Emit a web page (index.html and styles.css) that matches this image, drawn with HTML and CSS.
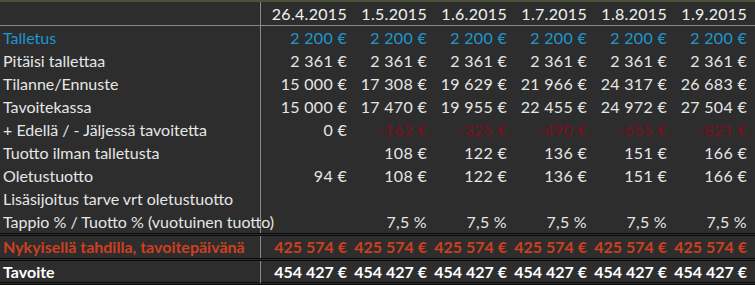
FILE: index.html
```html
<!DOCTYPE html>
<html lang="fi">
<head>
<meta charset="utf-8">
<title>Tavoite</title>
<link rel="stylesheet" href="styles.css">
</head>
<body>
<div class="sheet">
  <div class="row head">
    <div class="lbl"></div>
    <div class="v">26.4.2015</div><div class="v">1.5.2015</div><div class="v">1.6.2015</div><div class="v">1.7.2015</div><div class="v">1.8.2015</div><div class="v">1.9.2015</div>
  </div>
  <div class="row blue">
    <div class="lbl">Talletus</div>
    <div class="v">2 200 €</div><div class="v">2 200 €</div><div class="v">2 200 €</div><div class="v">2 200 €</div><div class="v">2 200 €</div><div class="v">2 200 €</div>
  </div>
  <div class="row">
    <div class="lbl">Pitäisi tallettaa</div>
    <div class="v">2 361 €</div><div class="v">2 361 €</div><div class="v">2 361 €</div><div class="v">2 361 €</div><div class="v">2 361 €</div><div class="v">2 361 €</div>
  </div>
  <div class="row">
    <div class="lbl">Tilanne/Ennuste</div>
    <div class="v">15 000 €</div><div class="v">17 308 €</div><div class="v">19 629 €</div><div class="v">21 966 €</div><div class="v">24 317 €</div><div class="v">26 683 €</div>
  </div>
  <div class="row">
    <div class="lbl">Tavoitekassa</div>
    <div class="v">15 000 €</div><div class="v">17 470 €</div><div class="v">19 955 €</div><div class="v">22 455 €</div><div class="v">24 972 €</div><div class="v">27 504 €</div>
  </div>
  <div class="row">
    <div class="lbl">+ Edellä / - Jäljessä tavoitetta</div>
    <div class="v">0 €</div><div class="v neg">-162 €</div><div class="v neg">-325 €</div><div class="v neg">-490 €</div><div class="v neg">-655 €</div><div class="v neg">-821 €</div>
  </div>
  <div class="row">
    <div class="lbl">Tuotto ilman talletusta</div>
    <div class="v"></div><div class="v">108 €</div><div class="v">122 €</div><div class="v">136 €</div><div class="v">151 €</div><div class="v">166 €</div>
  </div>
  <div class="row">
    <div class="lbl">Oletustuotto</div>
    <div class="v">94 €</div><div class="v">108 €</div><div class="v">122 €</div><div class="v">136 €</div><div class="v">151 €</div><div class="v">166 €</div>
  </div>
  <div class="row">
    <div class="lbl">Lisäsijoitus tarve vrt oletustuotto</div>
    <div class="v"></div><div class="v"></div><div class="v"></div><div class="v"></div><div class="v"></div><div class="v"></div>
  </div>
  <div class="row">
    <div class="lbl">Tappio % / Tuotto % (vuotuinen tuotto)</div>
    <div class="v"></div><div class="v">7,5 %</div><div class="v">7,5 %</div><div class="v">7,5 %</div><div class="v">7,5 %</div><div class="v">7,5 %</div>
  </div>
  <div class="row total orange">
    <div class="lbl">Nykyisellä tahdilla, tavoitepäivänä</div>
    <div class="v">425 574 €</div><div class="v">425 574 €</div><div class="v">425 574 €</div><div class="v">425 574 €</div><div class="v">425 574 €</div><div class="v">425 574 €</div>
  </div>
  <div class="row total last">
    <div class="lbl">Tavoite</div>
    <div class="v">454 427 €</div><div class="v">454 427 €</div><div class="v">454 427 €</div><div class="v">454 427 €</div><div class="v">454 427 €</div><div class="v">454 427 €</div>
  </div>
</div>
</body>
</html>
```
FILE: styles.css
```css
html, body {
  margin: 0;
  padding: 0;
  background: #2d2d2d;
}
.sheet {
  width: 755px;
  height: 285px;
  overflow: hidden;
  background: #2d2d2d;
  color: #e6e6e6;
  font-family: Lato, "Open Sans", sans-serif;
  font-size: 16px;
}
.row {
  display: grid;
  grid-template-columns: 260px 90px 80px 80px 80px 80px 80px 5px;
  height: 23px;
  line-height: 23px;
  box-sizing: border-box;
}
.lbl {
  padding-left: 3px;
  white-space: nowrap;
  overflow: visible;
  position: relative;
  z-index: 1;
}
.v {
  text-align: right;
  padding-right: 3px;
  white-space: nowrap;
  letter-spacing: 0.3px;
}
.row > .v:nth-child(2) {
  border-left: 1px solid #8a8a8a;
}
.head {
  height: 26px;
  line-height: 25px;
  border-top: 2px solid #4e5236;
  border-bottom: 1px solid #8a8a8a;
  color: #f2f2f2;
}
.head .v { line-height: 24px; }
.blue { color: #1e96d2; }
.neg { color: #7c0f1e; }
.total {
  font-weight: bold;
  height: 25px;
  line-height: 22px;
  border-top: 3px double #0a0a0a;
  color: #ffffff;
}
.total .v { letter-spacing: 0; }
.orange { color: #cf3f1e; }
.last {
  height: 27px;
  border-bottom: 3px double #0a0a0a;
}
```
